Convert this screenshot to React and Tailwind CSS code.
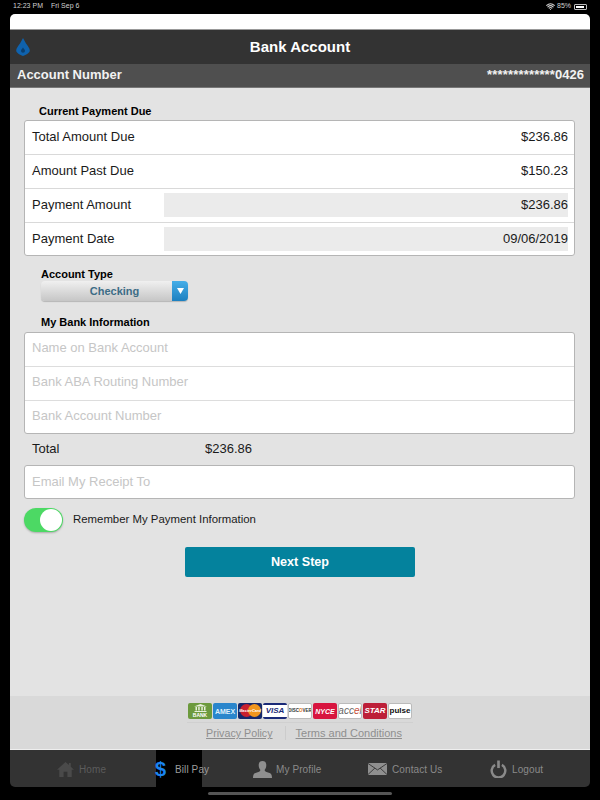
import React from 'react';
import { Wifi } from 'lucide-react';

const font = "font-['Liberation_Sans',Arial,sans-serif]";

const HomeIcon = () => (
  <svg width="17" height="17" viewBox="0 0 18 18" fill="#4a4a4a">
    <path d="M9 1 L12.6 4.2 V2 H14.6 V6 L18 9.2 H15.6 V17 H11 V11.5 H7 V17 H2.4 V9.2 H0 Z" />
  </svg>
);

const DollarIcon = () => (
  <span className="-ml-px w-[11px] text-[#1a84f0] text-[20px] leading-none font-bold flex justify-center">$</span>
);

const ProfileIcon = () => (
  <svg width="19" height="17" viewBox="0 0 18 18" preserveAspectRatio="none" fill="#8f8f8f">
    <path d="M9 0 C11.6 0 12.6 2 12.6 4.4 C12.6 7 11.6 8.4 11 9.4 C11 11 13 11.6 15 12.4 C17 13.2 18 14 18 18 H0 C0 14 1 13.2 3 12.4 C5 11.6 7 11 7 9.4 C6.4 8.4 5.4 7 5.4 4.4 C5.4 2 6.4 0 9 0 Z" />
  </svg>
);

const MailIcon = () => (
  <svg width="19" height="12" viewBox="0 0 18 13" preserveAspectRatio="none">
    <rect width="18" height="13" fill="#8f8f8f" />
    <path d="M0 0.5 L9 7.5 L18 0.5 M0 12.5 L6.5 5.5 M18 12.5 L11.5 5.5" stroke="#333" strokeWidth="0.9" fill="none" />
  </svg>
);

const PowerIcon = () => (
  <svg width="17" height="18" viewBox="0 0 18 18" fill="none" stroke="#8a8a8a" strokeWidth="2.6">
    <path d="M5.4 4.6 A7.2 7.2 0 1 0 12.6 4.6" />
    <path d="M9 0 V8" strokeWidth="2.8" />
  </svg>
);

const BankBadge = () => (
  <div className="w-[24px] h-[16px] rounded-[2px] bg-[#6c9a3d] flex flex-col items-center justify-between py-px">
    <svg width="13" height="8" viewBox="0 0 13 8" fill="#e8f0dc">
      <path d="M6.5 0 L13 2.5 H0 Z M1.5 3 H3 V6.5 H1.5 Z M4.2 3 H5.7 V6.5 H4.2 Z M7.3 3 H8.8 V6.5 H7.3 Z M10 3 H11.5 V6.5 H10 Z M0.5 7 H12.5 V8 H0.5 Z" />
    </svg>
    <span className="text-[5px] leading-none font-bold text-white">BANK</span>
  </div>
);

const MasterBadge = () => (
  <div className="relative w-[24px] h-[16px] rounded-[2px] bg-[#14286b] overflow-hidden">
    <div className="absolute left-[2px] top-[1px] w-[13px] h-[13px] rounded-full bg-[#c8202f]" />
    <div className="absolute left-[10px] top-[1px] w-[13px] h-[13px] rounded-full bg-[#f0961e]" />
    <span className="absolute inset-0 flex items-center justify-center text-[4px] italic font-bold text-white">MasterCard</span>
  </div>
);

const TextBadge = ({ className, children }) => (
  <div className={`w-[24px] h-[16px] rounded-[2px] flex items-center justify-center leading-none overflow-hidden ${className}`}>
    {children}
  </div>
);

const PaymentBadges = () => (
  <div className="flex items-center gap-px">
    <BankBadge />
    <TextBadge className="bg-[#2a86cc] text-[#dff0fb] text-[7px] font-bold">AMEX</TextBadge>
    <MasterBadge />
    <TextBadge className="bg-white border-y-2 border-[#1a2a78] text-[#1a2a78] text-[8px] italic font-bold">VISA</TextBadge>
    <TextBadge className="bg-white border border-[#bbbbbb] text-[#333] text-[4.5px] font-bold">DISC<span className="text-[#e8801e]">O</span>VER</TextBadge>
    <TextBadge className="bg-[#d8153f] text-white text-[7px] italic font-bold">NYCE</TextBadge>
    <TextBadge className="bg-white border border-[#bbbbbb] text-[#666] text-[10px] italic">acc<span className="text-[#c8503a]">e</span>l</TextBadge>
    <TextBadge className="bg-[#bd1f38] text-white text-[8px] italic font-bold">STAR</TextBadge>
    <TextBadge className="bg-white border border-[#bbbbbb] text-[#111] text-[8px] font-bold">pulse</TextBadge>
  </div>
);

const AmountRow = ({ label, value }) => (
  <div className="flex items-center justify-between h-[34px] pb-[2px] pl-[7px] pr-[6px] border-b border-[#d9d9d9] text-[13px] text-[#1a1a1a]">
    <span>{label}</span>
    <span>{value}</span>
  </div>
);

const InputRow = ({ label, value }) => (
  <div className="flex items-center h-[34px] pb-px last:h-[32px] last:pb-0 pl-[7px] pr-[6px] border-b border-[#d9d9d9] last:border-b-0 text-[13px] text-[#1a1a1a]">
    <span className="w-[132px]">{label}</span>
    <div className="flex-1 h-[24px] bg-[#ebebeb] flex items-center justify-end">{value}</div>
  </div>
);

const PlaceholderRow = ({ text }) => (
  <div className="flex items-center h-[34px] pb-[3px] last:h-[32px] last:pb-[2px] px-[7px] border-b border-[#dddddd] last:border-b-0 text-[13px] text-[#c6c6c6]">
    {text}
  </div>
);

const NavItem = ({ icon, label, className, textClass }) => (
  <div className={`flex items-center pt-px whitespace-nowrap ${className}`}>
    {icon}
    <span className={`text-[10px] tracking-[0.1px] ${textClass}`}>{label}</span>
  </div>
);

const App = () => {
  return (
    <div className={`relative w-[600px] h-[800px] bg-black overflow-hidden flex flex-col ${font}`}>
      {/* Status bar */}
      <div className="h-[14px] flex items-center justify-between px-[13px] text-[7px] text-[#d0d0d0]">
        <div className="flex gap-[8px] -mt-px">
          <span>12:23 PM</span>
          <span>Fri Sep 6</span>
        </div>
        <div className="flex items-center gap-[2px] -mt-px">
          <Wifi size={9} strokeWidth={3} />
          <span>85%</span>
          <div className="w-[13px] h-[6px] rounded-[1px] border border-[#bbb] p-px ml-px">
            <div className="w-[85%] h-full bg-white" />
          </div>
        </div>
      </div>

      <div className="mx-[10px] flex-none w-[580px] h-[773px] flex flex-col rounded-[5px] overflow-hidden">
        <div className="h-[15px] bg-white" />
        <div className="h-[1px] bg-[#999]" />

        {/* Header */}
        <div className="relative h-[34px] bg-[#333333] flex items-center justify-center">
          <svg className="absolute left-[6px] top-[8px]" width="14" height="18" viewBox="0 0 14 18">
            <path fill="#0f62ad" d="M7 0 L10 5.5 C11.8 8 13.8 10.4 13.8 12.4 C13.8 14 12.4 15.6 7 18 C1.6 15.6 0.2 14 0.2 12.4 C0.2 10.4 2.2 8 4 5.5 Z" />
            <path fill="#0a3f70" d="M7 9.5 C6.2 10.8 5 11.6 5 12.8 C5 14 5.9 14.8 7 14.8 C8.1 14.8 9 14 9 12.8 C9 11.6 7.8 10.8 7 9.5 Z" />
          </svg>
          <span className="text-white text-[15px] font-bold">Bank Account</span>
        </div>

        {/* Account number bar */}
        <div className="h-[24px] pb-px bg-[#4f4f4f] border-b border-[#777] flex items-center justify-between pl-[7px] pr-[6px] text-[#f2f2f2] text-[13px] font-bold">
          <span>Account Number</span>
          <span><span className="tracking-[0.17px]">*************</span>0426</span>
        </div>

        {/* Form */}
        <div className="flex-none h-[608px] bg-[#e3e3e3] pt-[16px] pl-[14px] pr-[15px] flex flex-col">
          <div className="pl-[15px] text-[11px] leading-[14px] font-bold text-black">Current Payment Due</div>
          <div className="mt-[2px] bg-white border border-[#b5b5b5] rounded-[3px]">
            <AmountRow label="Total Amount Due" value="$236.86" />
            <AmountRow label="Amount Past Due" value="$150.23" />
            <InputRow label="Payment Amount" value="$236.86" />
            <InputRow label="Payment Date" value="09/06/2019" />
          </div>

          <div className="mt-[11px] pl-[17px] text-[11px] leading-[14px] font-bold text-black">Account Type</div>
          <div className="ml-[17px] w-[147px] h-[20px] rounded-[4px] flex overflow-hidden shadow-[0_1px_1px_rgba(0,0,0,0.2)]">
            <div className="flex-1 pl-[16px] bg-gradient-to-b from-[#f0f0f0] to-[#c6c6c6] flex items-center justify-center text-[11px] font-bold text-[#3d6d86]">
              Checking
            </div>
            <div className="w-[16px] bg-gradient-to-b from-[#45aee8] to-[#1c80c0] flex items-center justify-center">
              <svg width="7" height="6" viewBox="0 0 7 6" fill="#ffffff"><path d="M0 0 H7 L3.5 6 Z" /></svg>
            </div>
          </div>

          <div className="mt-[14px] pl-[17px] text-[11px] leading-[14px] font-bold text-black">My Bank Information</div>
          <div className="mt-[3px] bg-white border border-[#b5b5b5] rounded-[3px]">
            <PlaceholderRow text="Name on Bank Account" />
            <PlaceholderRow text="Bank ABA Routing Number" />
            <PlaceholderRow text="Bank Account Number" />
          </div>

          <div className="mt-[7px] flex items-center h-[16px] pl-[8px] text-[13px] text-[#1a1a1a]">
            <span className="w-[173px]">Total</span>
            <span>$236.86</span>
          </div>

          <div className="mt-[8px] h-[34px] bg-white border border-[#b5b5b5] rounded-[3px] flex items-center px-[7px] text-[13px] text-[#c6c6c6]">
            Email My Receipt To
          </div>

          <div className="mt-[9px] flex items-center gap-[10px]">
            <div className="w-[39px] h-[24px] rounded-full bg-[#4cd964] flex items-center justify-end pr-px shadow-[0_1px_2px_rgba(0,0,0,0.25)]">
              <div className="w-[22px] h-[22px] rounded-full bg-white" />
            </div>
            <span className="text-[11.4px] text-[#1a1a1a]">Remember My Payment Information</span>
          </div>

          <div className="mt-[15px] ml-[161px] w-[230px] h-[30px] rounded-[2px] bg-[#04829d] flex items-center justify-center text-white text-[12.6px] font-bold">
            Next Step
          </div>
        </div>

        {/* Footer */}
        <div className="h-[54px] bg-[#d9d9d9] border-b border-[#eeeeee] flex flex-col items-center pt-[7px]">
          <PaymentBadges />
          <div className="mt-[3px] w-[226px] border-t border-[#d0d0d0]" />
          <div className="mt-[2px] ml-[8px] flex items-center text-[11px] text-[#8f8f8f]">
            <span className="underline text-[10.7px]">Privacy Policy</span>
            <span className="ml-[12px] mr-[10px] w-px h-[14px] bg-[#cccccc]" />
            <span className="underline">Terms and Conditions</span>
          </div>
        </div>

        {/* Tab bar */}
        <div className="flex-1 bg-[#333333] flex items-stretch">
          <NavItem icon={<HomeIcon />} label="Home" className="ml-[47px] w-[99px] gap-[5px]" textClass="text-[#5c5c5c]" />
          <NavItem icon={<DollarIcon />} label="Bill Pay" className="w-[46px] bg-black gap-[9px]" textClass="text-[#9c9c9c]" />
          <NavItem icon={<ProfileIcon />} label="My Profile" className="ml-[51px] w-[115px] gap-[4px]" textClass="text-[#8a8a8a]" />
          <NavItem icon={<MailIcon />} label="Contact Us" className="w-[122px] gap-[5px]" textClass="text-[#8a8a8a]" />
          <NavItem icon={<PowerIcon />} label="Logout" className="gap-[5px]" textClass="text-[#8a8a8a]" />
        </div>
      </div>

      {/* Home indicator */}
      <div className="absolute left-[208px] top-[792px] w-[184px] h-[3px] rounded-full bg-[#555555]" />
    </div>
  );
};

export default App;
